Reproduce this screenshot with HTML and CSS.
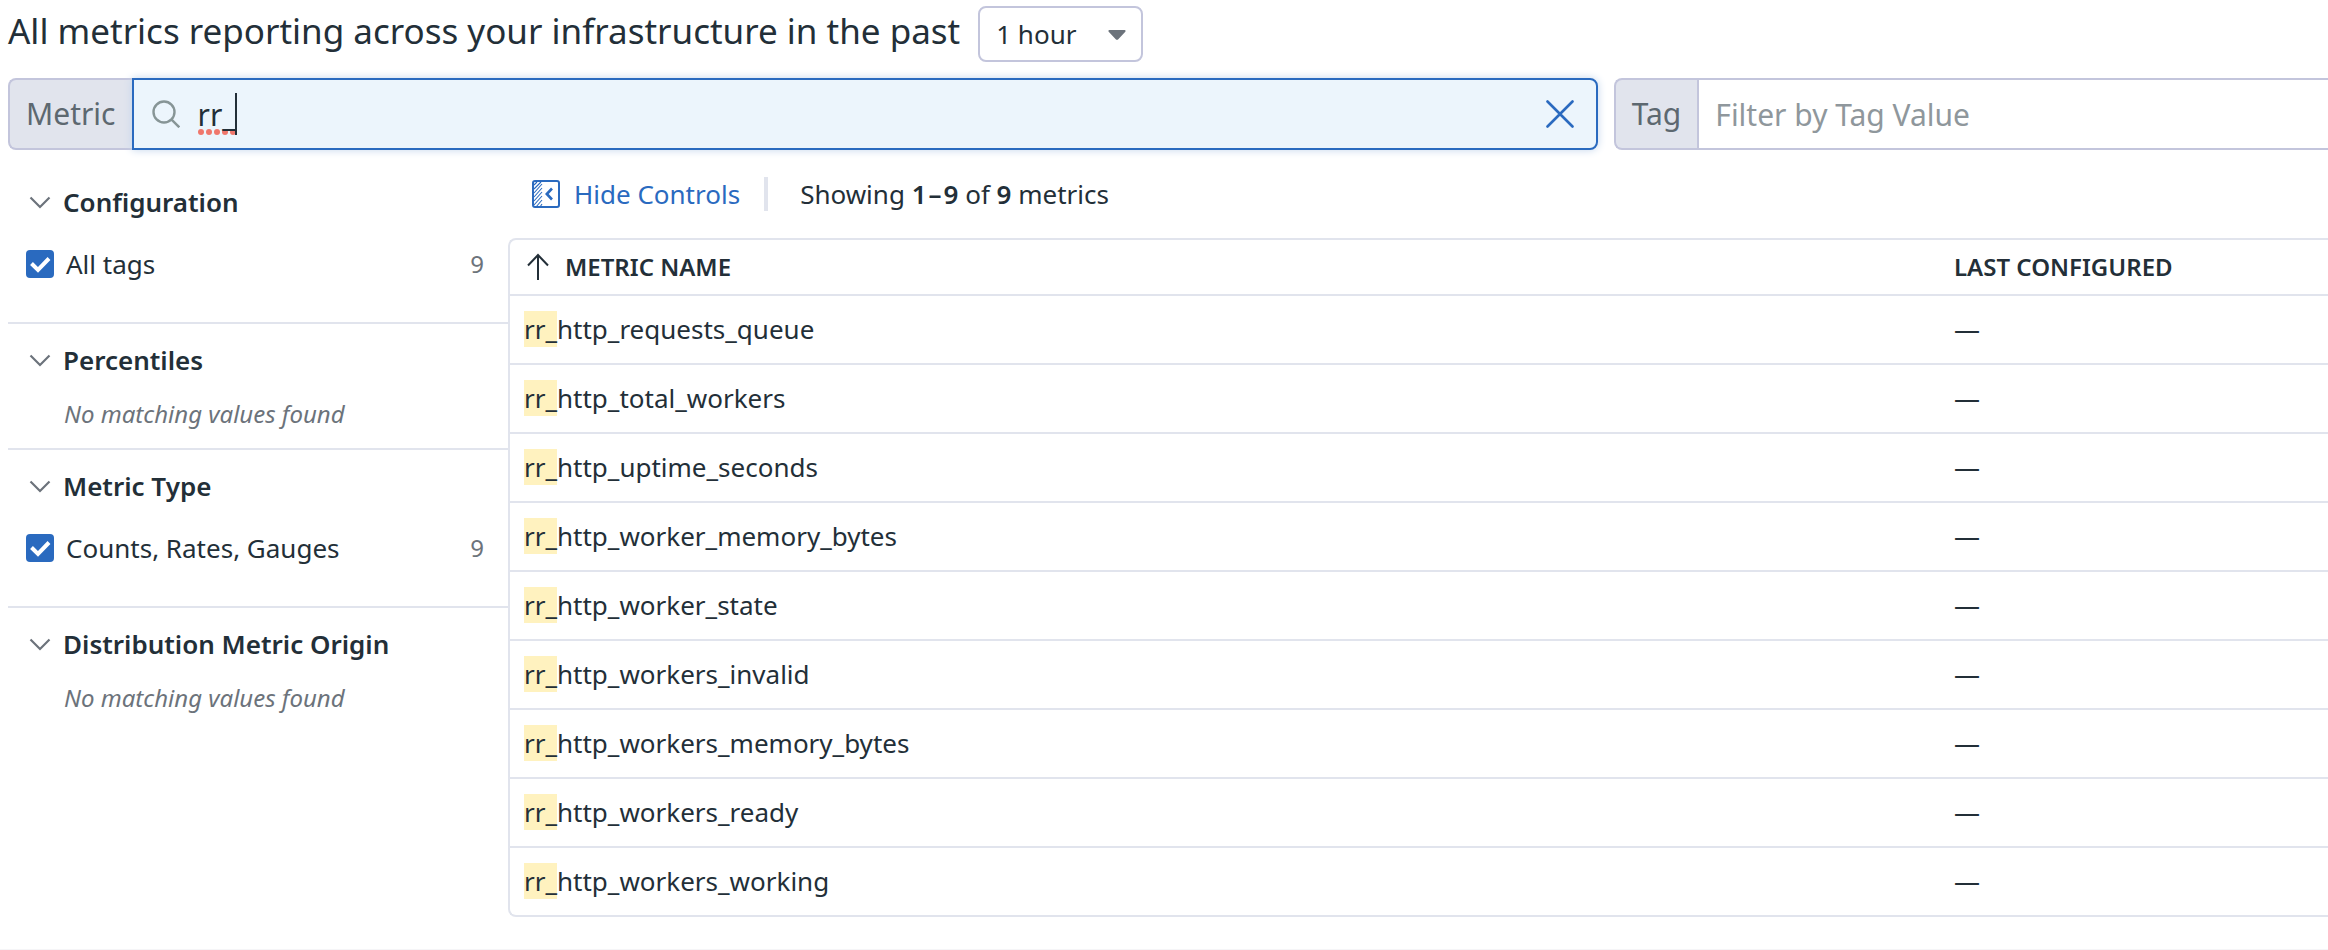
FILE: index.html
```html
<!DOCTYPE html>
<html lang="en">
<head>
<meta charset="utf-8">
<title>Metrics Summary</title>
<link rel="stylesheet" href="styles.css">
</head>
<body>
<header class="page-head">
  <h1 class="page-title"><label for="range">All metrics reporting across your infrastructure in the past</label></h1>
  <div class="range">
    <select id="range" class="range-select"><option>1 hour</option></select>
    <svg class="range-caret" width="18" height="10" viewBox="0 0 18 10"><path d="M1.500 0h15a1 1 0 0 1 .8 1.700L10.500 9a2 2 0 0 1-3 0L.7 1.700A1 1 0 0 1 1.500 0z" fill="#6c737b"/></svg>
  </div>
</header>

<div class="filters">
  <div class="filter">
    <label class="filter-label" for="metric">Metric</label>
    <div class="field field-active">
      <svg class="search-icon" width="28" height="28" viewBox="0 0 28 28" fill="none" stroke="#879596" stroke-width="2.400"><circle cx="12" cy="12" r="10.500"/><path d="M19.300 19.300l8 8"/></svg>
      <div class="field-text">
        <svg class="misspelling" width="38" height="6" viewBox="0 0 38 6" fill="#f0776c"><circle cx="3" cy="3" r="3"/><circle cx="11" cy="3" r="3"/><circle cx="19" cy="3" r="3"/><circle cx="27" cy="3" r="3"/><circle cx="35" cy="3" r="3"/></svg>
        <input id="metric" class="field-input" type="text" value="rr_" spellcheck="false">
        <span class="caret"></span>
      </div>
      <button class="clear" type="button" aria-label="Clear"><svg width="28" height="28" viewBox="0 0 28 28" fill="none" stroke="#2a6abf" stroke-width="2.600" stroke-linecap="round"><path d="M1.500 1.500l25 25M26.500 1.500l-25 25"/></svg></button>
    </div>
  </div>
  <div class="filter">
    <label class="filter-label" for="tag">Tag</label>
    <div class="field field-open">
      <input id="tag" class="field-input" type="text" placeholder="Filter by Tag Value">
    </div>
  </div>
</div>

<div class="content">
  <aside class="facets">
    <section class="facet">
      <button class="facet-head" type="button"><svg class="chevron" width="22" height="14" viewBox="0 0 22 14"><path d="M1.500 2.500L11 12l9.500-9.500"/></svg>Configuration</button>
      <div class="facet-row"><input id="all-tags" class="check" type="checkbox" checked><label class="facet-name" for="all-tags">All tags</label><span class="count">9</span></div>
    </section>
    <section class="facet">
      <button class="facet-head" type="button"><svg class="chevron" width="22" height="14" viewBox="0 0 22 14"><path d="M1.500 2.500L11 12l9.500-9.500"/></svg>Percentiles</button>
      <p class="empty">No matching values found</p>
    </section>
    <section class="facet">
      <button class="facet-head" type="button"><svg class="chevron" width="22" height="14" viewBox="0 0 22 14"><path d="M1.500 2.500L11 12l9.500-9.500"/></svg>Metric Type</button>
      <div class="facet-row"><input id="counts" class="check" type="checkbox" checked><label class="facet-name" for="counts">Counts, Rates, Gauges</label><span class="count">9</span></div>
    </section>
    <section class="facet">
      <button class="facet-head" type="button"><svg class="chevron" width="22" height="14" viewBox="0 0 22 14"><path d="M1.500 2.500L11 12l9.500-9.500"/></svg>Distribution Metric Origin</button>
      <p class="empty">No matching values found</p>
    </section>
  </aside>

  <main class="results">
    <div class="toolbar">
      <button class="hide" type="button"><svg width="28" height="28" viewBox="0 0 28 28" fill="none" stroke="#2a6abf"><rect x="1" y="1" width="26" height="26" rx="2" stroke-width="2"/><path d="M2 5l3-3M2 9l7-7M2 13l8-9M2 17l8-9M2 21l8-9M2 25l8-9M4 27l6-7M8 27l2-3" stroke-width="1.100"/><path d="M20 8.500L14.800 14l5.200 5.500" stroke-width="2.600"/></svg>Hide Controls</button>
      <span class="divider"></span>
      <span>Showing <b>1<span class="dash">–</span>9</b> of <b>9</b> metrics</span>
    </div>
    <table class="metrics">
      <colgroup><col><col class="col-configured"></colgroup>
      <thead><tr>
        <th><span class="sort"><svg width="22" height="28" viewBox="0 0 22 28" fill="none" stroke="#232f38" stroke-width="2"><path d="M11 27V2M1 12.500L11 2l10 10.500"/></svg>METRIC NAME</span></th>
        <th>LAST CONFIGURED</th>
      </tr></thead>
      <tbody>
        <tr><td><mark>rr_</mark>http_requests_queue</td><td>—</td></tr>
        <tr><td><mark>rr_</mark>http_total_workers</td><td>—</td></tr>
        <tr><td><mark>rr_</mark>http_uptime_seconds</td><td>—</td></tr>
        <tr><td><mark>rr_</mark>http_worker_memory_bytes</td><td>—</td></tr>
        <tr><td><mark>rr_</mark>http_worker_state</td><td>—</td></tr>
        <tr><td><mark>rr_</mark>http_workers_invalid</td><td>—</td></tr>
        <tr><td><mark>rr_</mark>http_workers_memory_bytes</td><td>—</td></tr>
        <tr><td><mark>rr_</mark>http_workers_ready</td><td>—</td></tr>
        <tr><td><mark>rr_</mark>http_workers_working</td><td>—</td></tr>
      </tbody>
    </table>
  </main>
</div>
</body>
</html>
```
FILE: styles.css
```css
* { box-sizing: border-box; }

body {
  margin: 0;
  padding: 6px 0 32px 8px;
  border-bottom: 1px solid #f5f5f7;
  background: #fff;
  color: #232f38;
  font: 26px/36px "Noto Sans", sans-serif;
}

button, input, select { font: inherit; color: inherit; }
button { border: 0; padding: 0; background: none; }
svg { display: block; flex: none; }
b { font-weight: 600; }

.page-head { display: flex; gap: 18px; height: 56px; }
.page-title { margin: 0; font-size: 35px; font-weight: 400; line-height: 50px; }
.range { position: relative; width: 165px; }
.range-select {
  appearance: none;
  width: 100%;
  height: 56px;
  padding: 0 16px;
  border: 2px solid #c3c5dc;
  border-radius: 8px;
  background: #fff;
}
.range-caret { position: absolute; right: 17px; top: 24px; pointer-events: none; }

.filters { display: grid; grid-template-columns: 69fr 31fr; gap: 16px; margin-top: 16px; }
.filter { display: flex; height: 72px; font-size: 30px; line-height: 40px; }
.filter-label {
  display: flex;
  align-items: center;
  padding: 0 16px;
  border: 2px solid #c3c5dc;
  border-right: 0;
  border-radius: 8px 0 0 8px;
  background: #e1e4ed;
  color: #5d6870;
}
.field {
  display: flex;
  flex: 1;
  align-items: center;
  min-width: 0;
  border: 2px solid #c3c5dc;
  background: #fff;
}
.field-active {
  padding: 0 22px 0 18px;
  border-color: #2a6abf;
  border-radius: 0 8px 8px 0;
  background: #ecf5fc;
  box-shadow: 0 0 8px #c3d5ec;
}
.field-open { padding-left: 16px; border-right: 0; }
.field-text { position: relative; flex: 1; margin-left: 18px; }
.field-input {
  display: block;
  position: relative;
  width: 100%;
  height: 42px;
  padding: 0;
  border: 0;
  outline: 0;
  background: none;
}
.field-input::placeholder { color: #8f979c; opacity: 1; }
.misspelling { position: absolute; left: 0; bottom: 0; }
.caret { position: absolute; left: 37px; top: 0; width: 2px; height: 42px; background: #232f38; }

.content { display: grid; grid-template-columns: 500px 1fr; }

.facets { padding-top: 16px; }
.facet { padding: 18px 24px 0 18px; border-bottom: 2px solid #e1e4ed; }
.facet:last-child { border-bottom: 0; }
.facet-head { display: flex; align-items: center; gap: 12px; font-weight: 600; padding-left: 3px; }
.chevron { fill: none; stroke: #6c737b; stroke-width: 2.2; }
.facet-row { display: flex; align-items: center; padding: 26px 0 40px; }
.check {
  appearance: none;
  flex: none;
  width: 28px;
  height: 28px;
  margin: 0 12px 0 0;
  border-radius: 4px;
  background: #2a6abf url("data:image/svg+xml,%3Csvg xmlns='http://www.w3.org/2000/svg' viewBox='0 0 28 28'%3E%3Cpath d='M5.500 13.500l6.500 6.500L23 8.500' fill='none' stroke='white' stroke-width='4'/%3E%3C/svg%3E");
}
.facet-name { flex: 1; }
.count { font-size: 24px; color: #6c737b; }
.empty { margin: 0; padding: 20px 0 18px 38px; font-size: 24px; line-height: 32px; font-style: italic; color: #6c737b; }

.toolbar { display: flex; align-items: center; padding: 26px 0 26px 24px; }
.hide { display: flex; align-items: center; gap: 14px; color: #2a6abf; }
.divider { width: 4px; height: 34px; margin: 0 32px 0 24px; background: #e1e4ed; }
.dash { margin: 0 2px; }

.metrics {
  width: 100%;
  table-layout: fixed;
  border-collapse: separate;
  border-spacing: 0;
  border: 2px solid #e1e4ed;
  border-right: 0;
  border-radius: 8px 0 0 8px;
}
.col-configured { width: 388px; }
.metrics th, .metrics td { padding: 0 14px; text-align: left; }
.metrics th { height: 56px; font-size: 24px; font-weight: 600; border-bottom: 2px solid #e1e4ed; }
.metrics td { height: 69px; padding-bottom: 2px; border-bottom: 2px solid #e1e4ed; }
.metrics tbody tr:last-child td { height: 67px; border-bottom: 0; }
.sort { display: flex; align-items: center; gap: 16px; padding-left: 3px; }
mark { background: #fff2bf; color: inherit; }
```
